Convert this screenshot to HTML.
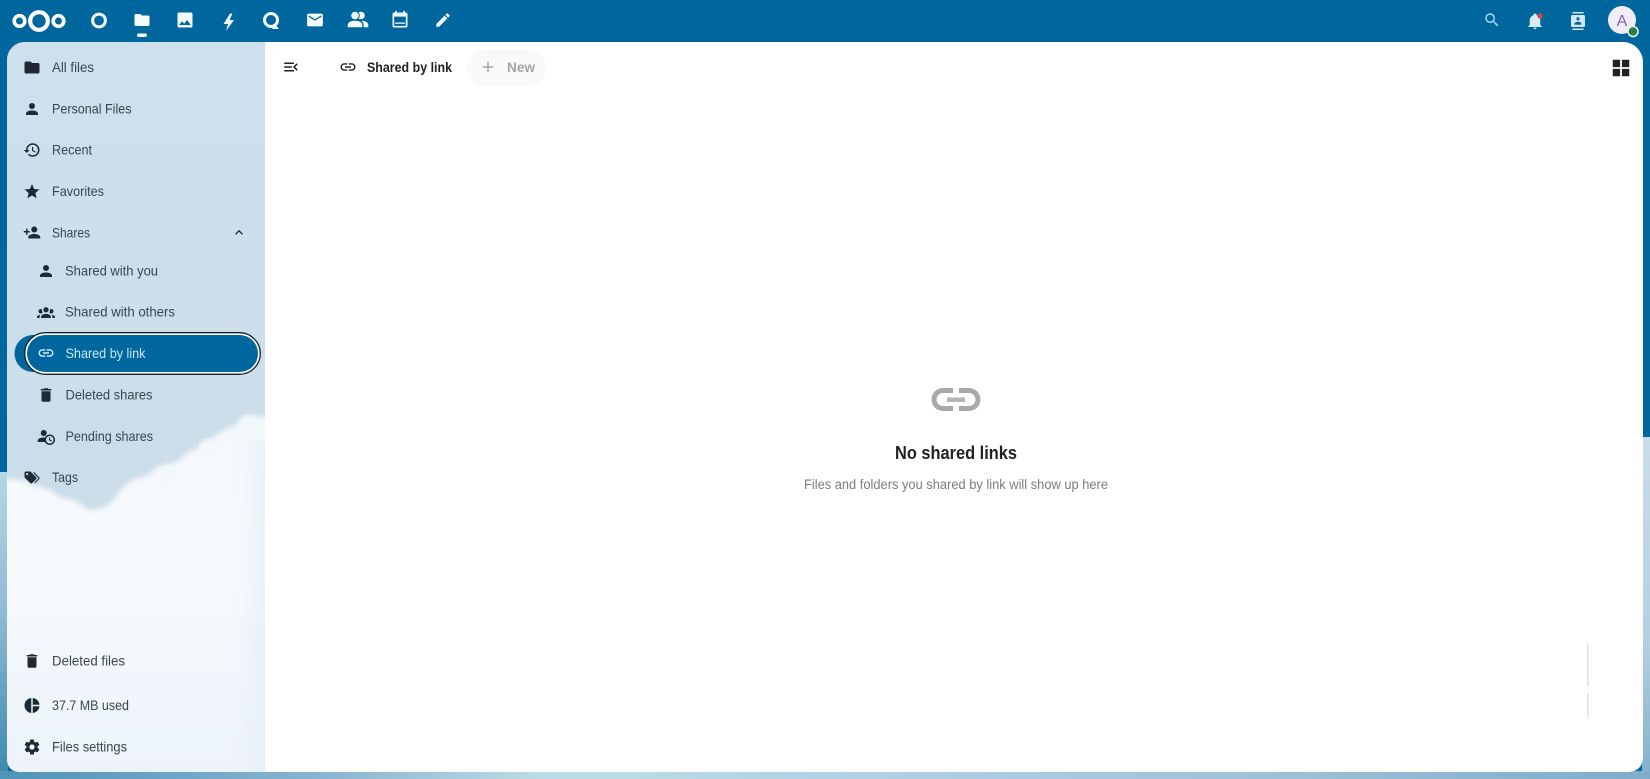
<!DOCTYPE html>
<html><head><meta charset="utf-8"><title>Files</title>
<style>
html,body{margin:0;padding:0;width:1650px;height:779px;overflow:hidden;background:#00679e}
svg{display:block;position:absolute;left:0;top:0}
text{font-family:"Liberation Sans",sans-serif;font-size:14px;fill:#3a464e}
.b{font-weight:bold}
</style></head><body>
<svg width="1650" height="779" viewBox="0 0 1650 779" xmlns="http://www.w3.org/2000/svg">
<defs>
<linearGradient id="lstrip" x1="0" y1="0" x2="0" y2="1"><stop offset="0" stop-color="#b4d6e6"/><stop offset=".45" stop-color="#8fbcd4"/><stop offset="1" stop-color="#3a87ad"/></linearGradient>
<linearGradient id="rstrip" x1="0" y1="0" x2="0" y2="1"><stop offset="0" stop-color="#c9dce9"/><stop offset=".6" stop-color="#b5cfe0"/><stop offset="1" stop-color="#7fb0cc"/></linearGradient>
<linearGradient id="bstrip" x1="0" y1="0" x2="1" y2="0"><stop offset="0" stop-color="#4f93b8"/><stop offset=".2" stop-color="#8ab6d0"/><stop offset=".33" stop-color="#bcdde6"/><stop offset=".5" stop-color="#b2d2e4"/><stop offset=".75" stop-color="#a0c3da"/><stop offset="1" stop-color="#7fadc9"/></linearGradient>
<linearGradient id="sky" x1="0" y1="0" x2="0" y2="1"><stop offset="0" stop-color="#cee0ec"/><stop offset=".75" stop-color="#c9dce8"/><stop offset="1" stop-color="#bdd1dd"/></linearGradient>
<linearGradient id="cloud" x1="0" y1="0" x2="0" y2="1"><stop offset="0" stop-color="#f3f8fb"/><stop offset=".4" stop-color="#f6fafd"/><stop offset="1" stop-color="#ecf3f8"/></linearGradient>
<linearGradient id="fade" x1="0" y1="0" x2="1" y2="0"><stop offset="0" stop-color="#e4edf3" stop-opacity="0"/><stop offset="1" stop-color="#e4edf3" stop-opacity=".6"/></linearGradient>
<clipPath id="side"><path d="M25 42H265V772H21Q7 772 7 758V60A18 18 0 0 1 25 42Z"/></clipPath>
<filter id="bl" x="-5%" y="-5%" width="110%" height="110%"><feGaussianBlur stdDeviation="2.6"/></filter>
</defs>

<!-- background strips -->
<rect x="0" y="0" width="1650" height="779" fill="#00679e"/>
<rect x="0" y="472" width="8" height="307" fill="url(#lstrip)"/>
<rect x="1642" y="437" width="8" height="342" fill="url(#rstrip)"/>
<rect x="0" y="771" width="1650" height="8" fill="url(#bstrip)"/>

<!-- main panel -->
<path d="M25 42H1623A20 20 0 0 1 1643 62V756Q1643 772 1627 772H21Q7 772 7 758V60A18 18 0 0 1 25 42Z" fill="#fff"/>

<!-- sidebar -->
<g clip-path="url(#side)">
<rect x="7" y="42" width="258" height="730" fill="url(#sky)"/>
<g filter="url(#bl)" fill="url(#cloud)">
<path d="M275 416L262 417L248 415L238 424L226 429L214 436L204 446L190 451L176 462L160 466L146 476L132 480L120 490L112 502L100 509L88 510L76 501L60 497L50 490L36 486L22 480L0 478V790H275Z"/>
</g>
<circle cx="248" cy="426" r="10" fill="#f3f8fb" filter="url(#bl)"/>
<circle cx="208" cy="448" r="9" fill="#f3f8fb" filter="url(#bl)"/>
<circle cx="165" cy="476" r="10" fill="#f3f8fb" filter="url(#bl)"/>
<rect x="235" y="440" width="30" height="332" fill="url(#fade)"/>
</g>

<!-- header logo -->
<g fill="none" stroke="#fff">
<circle cx="39" cy="21" r="8.8" stroke-width="4.2"/>
<circle cx="19.5" cy="21" r="5.3" stroke-width="3.6"/>
<circle cx="58.5" cy="21" r="5.3" stroke-width="3.6"/>
</g>

<!-- header nav icons -->
<circle cx="99" cy="20.5" r="6.4" fill="none" stroke="#f1f7fb" stroke-width="3"/>
<g fill="#f4f9fc">
<svg x="133" y="11" width="18" height="18" viewBox="0 0 24 24"><path d="M10,4H4C2.89,4 2,4.89 2,6V18A2,2 0 0,0 4,20H20A2,2 0 0,0 22,18V8C22,6.89 21.1,6 20,6H12L10,4Z"/></svg>
<rect x="137" y="33.500" width="10" height="3.500" rx="1.700"/>
<svg x="175" y="10" width="20" height="20" viewBox="0 0 24 24"><path d="M8.5,13.5L11,16.5L14.5,12L19,18H5M21,19V5C21,3.89 20.1,3 19,3H5A2,2 0 0,0 3,5V19A2,2 0 0,0 5,21H19A2,2 0 0,0 21,19Z"/></svg>
<path d="M230 13.500L223.500 24H228L226 31L234 20H229.500L232.500 13.500Z"/>
</g>
<circle cx="271" cy="20" r="6.500" fill="none" stroke="#f1f7fb" stroke-width="3"/>
<path d="M275 24L279 29H272Z" fill="#f4f9fc"/>
<g fill="#f4f9fc">
<svg x="305.500" y="10.500" width="19" height="19" viewBox="0 0 24 24"><path d="M20,8L12,13L4,8V6L12,11L20,6M20,4H4C2.89,4 2,4.89 2,6V18A2,2 0 0,0 4,20H20A2,2 0 0,0 22,18V6C22,4.89 21.1,4 20,4Z"/></svg>
<svg x="346" y="8" width="24" height="24" viewBox="0 0 24 24" stroke="#f4f9fc" stroke-width=".6"><path d="M16 17v2H2v-2s0-4 7-4 7 4 7 4m-3.500-9.500A3.500 3.500 0 1 0 9 11a3.500 3.500 0 0 0 3.500-3.500m3.440 5.500A5.320 5.320 0 0 1 18 17v2h4v-2s0-3.630-6.060-4M15 4a3.390 3.390 0 0 0-1.930.590 5 5 0 0 1 0 5.820A3.390 3.390 0 0 0 15 11a3.500 3.500 0 0 0 0-7z"/></svg>
<svg x="390" y="9" width="20" height="22" viewBox="0 0 24 24"><path d="M19 19H5V8h14v11zM16 1v2H8V1H6v2H5c-1.110 0-2 .890-2 2v14a2 2 0 0 0 2 2h14a2 2 0 0 0 2-2V5c0-1.110-.900-2-2-2h-1V1h-2zM6 15h12v1.500H6z"/></svg>
<svg x="434" y="11" width="18" height="18" viewBox="0 0 24 24"><path d="M20.71,7.04C21.1,6.65 21.1,6 20.71,5.63L18.37,3.29C18,2.9 17.35,2.9 16.96,3.29L15.12,5.12L18.87,8.87M3,17.25V21H6.75L17.81,9.93L14.06,6.18L3,17.25Z"/></svg>
</g>

<!-- header right -->
<svg x="1483" y="11" width="18" height="18" viewBox="0 0 24 24" fill="#a9d6f5"><path d="M9.5,3A6.5,6.5 0 0,1 16,9.5C16,11.11 15.41,12.59 14.44,13.73L14.71,14H15.5L20.5,19L19,20.5L14,15.5V14.71L13.73,14.44C12.59,15.41 11.11,16 9.5,16A6.5,6.5 0 0,1 3,9.5A6.5,6.5 0 0,1 9.5,3M9.5,5C7,5 5,7 5,9.5C5,12 7,14 9.5,14C12,14 14,12 14,9.5C14,7 12,5 9.5,5Z"/></svg>
<svg x="1526" y="11" width="18" height="20" viewBox="0 0 24 24" fill="#d8ebf6"><path d="M21,19V20H3V19L5,17V11C5,7.9 7.03,5.17 10,4.29C10,4.19 10,4.1 10,4A2,2 0 0,1 12,2A2,2 0 0,1 14,4C14,4.1 14,4.19 14,4.29C16.97,5.17 19,7.9 19,11V17L21,19M14,21A2,2 0 0,1 12,23A2,2 0 0,1 10,21"/></svg>
<circle cx="1540" cy="16" r="2.600" fill="#d9473a"/>
<svg x="1571" y="12" width="14" height="18" viewBox="2 0 20 24" preserveAspectRatio="none" fill="#d3e7f3"><path d="M20,0H4V2H20V0M4,24H20V22H4V24M20,4H4A2,2 0 0,0 2,6V18A2,2 0 0,0 4,20H20A2,2 0 0,0 22,18V6A2,2 0 0,0 20,4M12,6.75A2.25,2.25 0 0,1 14.25,9A2.25,2.25 0 0,1 12,11.25A2.25,2.25 0 0,1 9.75,9A2.25,2.25 0 0,1 12,6.75M17,17H7V15.5C7,13.83 10.33,13 12,13C13.67,13 17,13.83 17,15.5V17Z"/></svg>
<circle cx="1622" cy="20" r="14" fill="#f1edf7"/>
<text x="1622" y="26" text-anchor="middle" style="font-size:16px;fill:#7f63ac">A</text>
<circle cx="1633" cy="31.500" r="5" fill="#2f7d40" stroke="#e9f1ee" stroke-width="1.500"/>

<!-- sidebar active pill -->
<path d="M33 335H70V372H33A18.500 18.500 0 0 1 33 335Z" fill="#00679e"/>
<rect x="24.700" y="332.700" width="235.600" height="41.600" rx="20.800" fill="#fff" stroke="#14222c" stroke-width="1.300"/>
<rect x="27" y="335" width="231" height="37" rx="18.500" fill="#00679e"/>

<!-- sidebar icons -->
<g fill="#1e2a33">
<svg x="23" y="58.500" width="18" height="18" viewBox="0 0 24 24"><path d="M10,4H4C2.89,4 2,4.89 2,6V18A2,2 0 0,0 4,20H20A2,2 0 0,0 22,18V8C22,6.89 21.1,6 20,6H12L10,4Z"/></svg>
<svg x="23" y="100" width="18" height="18" viewBox="0 0 24 24"><path d="M12,4A4,4 0 0,1 16,8A4,4 0 0,1 12,12A4,4 0 0,1 8,8A4,4 0 0,1 12,4M12,14C16.42,14 20,15.79 20,18V20H4V18C4,15.79 7.58,14 12,14Z"/></svg>
<svg x="23" y="141" width="18" height="18" viewBox="0 0 24 24"><path d="M13.5,8H12V13L16.28,15.54L17,14.33L13.5,12.25V8M13,3A9,9 0 0,0 4,12H1L4.96,16.03L9,12H6A7,7 0 0,1 13,5A7,7 0 0,1 20,12A7,7 0 0,1 13,19C11.07,19 9.32,18.21 8.06,16.94L6.64,18.36C8.27,20 10.5,21 13,21A9,9 0 0,0 22,12A9,9 0 0,0 13,3"/></svg>
<svg x="23" y="182.500" width="18" height="18" viewBox="0 0 24 24"><path d="M12,17.27L18.18,21L16.54,13.97L22,9.24L14.81,8.62L12,2L9.19,8.62L2,9.24L7.45,13.97L5.82,21L12,17.27Z"/></svg>
<svg x="23" y="223.500" width="18" height="18" viewBox="0 0 24 24"><path d="M15,14C12.33,14 7,15.33 7,18V20H23V18C23,15.33 17.67,14 15,14M6,10V7H4V10H1V12H4V15H6V12H9V10M15,12A4,4 0 0,0 19,8A4,4 0 0,0 15,4A4,4 0 0,0 11,8A4,4 0 0,0 15,12Z"/></svg>
<svg x="231" y="224.500" width="16" height="16" viewBox="0 0 24 24"><path d="M7.41,15.41L12,10.83L16.59,15.41L18,14L12,8L6,14L7.41,15.41Z"/></svg>
<svg x="37" y="262" width="18" height="18" viewBox="0 0 24 24"><path d="M12,4A4,4 0 0,1 16,8A4,4 0 0,1 12,12A4,4 0 0,1 8,8A4,4 0 0,1 12,4M12,14C16.42,14 20,15.79 20,18V20H4V18C4,15.79 7.58,14 12,14Z"/></svg>
<svg x="37" y="303" width="18" height="18" viewBox="0 0 24 24"><path d="M12,5.5A3.5,3.5 0 0,1 15.5,9A3.5,3.5 0 0,1 12,12.5A3.5,3.5 0 0,1 8.5,9A3.5,3.5 0 0,1 12,5.5M5,8C5.56,8 6.08,8.15 6.53,8.42C6.38,9.85 6.8,11.27 7.66,12.38C7.16,13.34 6.16,14 5,14A3,3 0 0,1 2,11A3,3 0 0,1 5,8M19,8A3,3 0 0,1 22,11A3,3 0 0,1 19,14C17.84,14 16.84,13.34 16.34,12.38C17.2,11.27 17.62,9.85 17.47,8.42C17.92,8.15 18.44,8 19,8M5.500,18.25C5.5,16.18 8.41,14.5 12,14.5C15.59,14.5 18.5,16.18 18.5,18.25V20H5.5V18.25M0,20V18.5C0,17.11 1.89,15.94 4.45,15.6C3.86,16.28 3.5,17.22 3.5,18.25V20H0M24,20H20.5V18.25C20.5,17.22 20.14,16.28 19.55,15.6C22.11,15.94 24,17.11 24,18.5V20Z"/></svg>
<svg x="37" y="386" width="18" height="18" viewBox="0 0 24 24"><path d="M19,4H15.5L14.5,3H9.500L8.500,4H5V6H19M6,19A2,2 0 0,0 8,21H16A2,2 0 0,0 18,19V7H6V19Z"/></svg>
<svg x="37" y="427" width="18" height="18" viewBox="0 0 24 24"><path d="M10.63,14.1C12.23,10.58 16.38,9.03 19.9,10.63C23.42,12.23 24.97,16.38 23.37,19.9C22.24,22.4 19.75,24 17,24C14.3,24 11.83,22.44 10.67,20H1V18C1.06,16.86 1.84,15.93 3.34,15.18C4.84,14.43 6.72,14.04 9,14C9.57,14 10.11,14.05 10.63,14.1M9,4C10.12,4.03 11.06,4.42 11.81,5.17C12.56,5.92 12.93,6.86 12.93,8C12.93,9.14 12.56,10.08 11.81,10.83C11.06,11.58 10.12,11.95 9,11.95C7.88,11.95 6.94,11.58 6.19,10.83C5.44,10.08 5.07,9.14 5.07,8C5.07,6.86 5.44,5.92 6.19,5.17C6.94,4.42 7.88,4.03 9,4M17,22A5,5 0 0,0 22,17A5,5 0 0,0 17,12A5,5 0 0,0 12,17A5,5 0 0,0 17,22M16,14H17.5V16.82L19.94,18.23L19.19,19.53L16,17.69V14Z"/></svg>
<svg x="23" y="468.500" width="18" height="18" viewBox="0 0 24 24"><path d="M5.5,9A1.5,1.5 0 0,0 7,7.5A1.5,1.5 0 0,0 5.5,6A1.5,1.5 0 0,0 4,7.5A1.5,1.5 0 0,0 5.5,9M17.41,11.58C17.77,11.94 18,12.44 18,13C18,13.55 17.78,14.05 17.41,14.41L12.41,19.41C12.05,19.77 11.55,20 11,20C10.45,20 9.95,19.78 9.58,19.41L2.59,12.42C2.22,12.05 2,11.55 2,11V6C2,4.89 2.89,4 4,4H9C9.55,4 10.05,4.22 10.41,4.58L17.41,11.58M13.54,5.71L14.54,4.71L21.41,11.58C21.78,11.94 22,12.45 22,13C22,13.55 21.78,14.05 21.42,14.41L16.04,19.79L15.04,18.79L20.75,13L13.54,5.71Z"/></svg>
<svg x="23" y="652" width="18" height="18" viewBox="0 0 24 24"><path d="M19,4H15.5L14.5,3H9.500L8.500,4H5V6H19M6,19A2,2 0 0,0 8,21H16A2,2 0 0,0 18,19V7H6V19Z"/></svg>
<svg x="23" y="696.500" width="18" height="18" viewBox="0 0 24 24"><path d="M11,2V22C5.9,21.5 2,17.2 2,12C2,6.8 5.9,2.5 11,2M13,2V11H22C21.5,6.2 17.8,2.5 13,2M13,13V22C17.7,21.5 21.5,17.8 22,13H13Z"/></svg>
<svg x="23" y="738" width="18" height="18" viewBox="0 0 24 24"><path d="M12,15.5A3.5,3.5 0 0,1 8.5,12A3.5,3.5 0 0,1 12,8.5A3.5,3.5 0 0,1 15.5,12A3.5,3.5 0 0,1 12,15.5M19.43,12.97C19.47,12.65 19.5,12.33 19.5,12C19.5,11.67 19.47,11.34 19.43,11L21.54,9.37C21.73,9.22 21.78,8.95 21.66,8.73L19.66,5.27C19.54,5.05 19.27,4.96 19.05,5.05L16.56,6.05C16.04,5.66 15.5,5.32 14.87,5.07L14.5,2.42C14.46,2.18 14.25,2 14,2H10C9.75,2 9.54,2.18 9.5,2.42L9.13,5.07C8.5,5.32 7.96,5.66 7.44,6.05L4.95,5.05C4.73,4.96 4.46,5.05 4.34,5.27L2.34,8.73C2.21,8.95 2.27,9.22 2.46,9.37L4.57,11C4.53,11.34 4.5,11.67 4.5,12C4.5,12.33 4.53,12.65 4.57,12.97L2.46,14.63C2.27,14.78 2.21,15.05 2.34,15.27L4.34,18.73C4.46,18.95 4.73,19.03 4.95,18.95L7.44,17.94C7.96,18.34 8.5,18.68 9.13,18.93L9.5,21.58C9.54,21.82 9.75,22 10,22H14C14.25,22 14.46,21.82 14.5,21.58L14.87,18.93C15.5,18.67 16.04,18.34 16.56,17.94L19.05,18.95C19.27,19.03 19.54,18.95 19.66,18.73L21.66,15.27C21.78,15.05 21.73,14.78 21.54,14.63L19.43,12.97Z"/></svg>
</g>
<svg x="37" y="344" width="18" height="18" viewBox="0 0 24 24" fill="#d5ecfb"><path d="M3.9,12C3.9,10.29 5.29,8.9 7,8.9H11V7H7A5,5 0 0,0 2,12A5,5 0 0,0 7,17H11V15.1H7C5.29,15.1 3.9,13.71 3.9,12M8,13H16V11H8V13M17,7H13V8.9H17C18.71,8.9 20.1,10.29 20.1,12C20.1,13.71 18.71,15.1 17,15.1H13V17H17A5,5 0 0,0 22,12A5,5 0 0,0 17,7Z"/></svg>

<!-- sidebar text -->
<text x="52" y="72" textLength="42" lengthAdjust="spacingAndGlyphs">All files</text>
<text x="52" y="113.500" textLength="79.500" lengthAdjust="spacingAndGlyphs">Personal Files</text>
<text x="52" y="154.500" textLength="40" lengthAdjust="spacingAndGlyphs">Recent</text>
<text x="52" y="196" textLength="52" lengthAdjust="spacingAndGlyphs">Favorites</text>
<text x="52" y="237.500" textLength="38" lengthAdjust="spacingAndGlyphs">Shares</text>
<text x="65" y="275.500" textLength="93" lengthAdjust="spacingAndGlyphs">Shared with you</text>
<text x="65" y="316.500" textLength="110" lengthAdjust="spacingAndGlyphs">Shared with others</text>
<text x="65.500" y="358" textLength="80" lengthAdjust="spacingAndGlyphs" style="fill:#c9e8fb">Shared by link</text>
<text x="65.500" y="399.500" textLength="87" lengthAdjust="spacingAndGlyphs">Deleted shares</text>
<text x="65.500" y="441" textLength="87.500" lengthAdjust="spacingAndGlyphs">Pending shares</text>
<text x="52" y="482" textLength="26" lengthAdjust="spacingAndGlyphs">Tags</text>
<text x="52" y="665.500" textLength="73" lengthAdjust="spacingAndGlyphs">Deleted files</text>
<text x="52" y="710" textLength="77" lengthAdjust="spacingAndGlyphs">37.7 MB used</text>
<text x="52" y="751.500" textLength="75" lengthAdjust="spacingAndGlyphs">Files settings</text>

<!-- toolbar -->
<svg x="282" y="58" width="18" height="18" viewBox="0 0 24 24" fill="#222"><path d="M21,15.61L19.59,17L14.58,12L19.59,7L21,8.39L17.44,12L21,15.61M3,6H16V8H3V6M3,13V11H13V13H3M3,18V16H16V18H3Z"/></svg>
<svg x="339" y="58" width="18" height="18" viewBox="0 0 24 24" fill="#222"><path d="M3.9,12C3.9,10.29 5.29,8.9 7,8.9H11V7H7A5,5 0 0,0 2,12A5,5 0 0,0 7,17H11V15.1H7C5.29,15.1 3.9,13.71 3.9,12M8,13H16V11H8V13M17,7H13V8.9H17C18.71,8.9 20.1,10.29 20.1,12C20.1,13.71 18.71,15.1 17,15.1H13V17H17A5,5 0 0,0 22,12A5,5 0 0,0 17,7Z"/></svg>
<text class="b" x="367" y="72" textLength="85" lengthAdjust="spacingAndGlyphs" style="fill:#222">Shared by link</text>
<rect x="467" y="50" width="79" height="36" rx="18" fill="#f9f9f9"/>
<svg x="479" y="58" width="18" height="18" viewBox="0 0 24 24" fill="#a6a6a6"><path d="M19 13h-6v6h-2v-6H5v-2h6V5h2v6h6z"/></svg>
<text class="b" x="507" y="72" textLength="28" lengthAdjust="spacingAndGlyphs" style="fill:#a3a3a3">New</text>
<svg x="1610" y="57" width="22" height="22" viewBox="0 0 24 24" fill="#222"><path d="M3 11h8V3H3m0 18h8v-8H3m10 8h8v-8h-8m0-10v8h8V3"/></svg>

<!-- empty state -->
<g fill="none" stroke="#a9a9a9" stroke-width="5">
<path d="M953 390.500H943a9 9 0 0 0 0 18H953"/>
<path d="M959 390.500H969a9 9 0 0 1 0 18H959"/>
</g>
<rect x="947" y="397.500" width="18" height="4.500" fill="#b4b4b4"/>
<text class="b" x="895" y="459" textLength="122" lengthAdjust="spacingAndGlyphs" style="font-size:18px;fill:#222">No shared links</text>
<text x="804" y="489" textLength="304" lengthAdjust="spacingAndGlyphs" style="font-size:13.500px;fill:#7d7d7d">Files and folders you shared by link will show up here</text>

<!-- faint lines -->
<rect x="1587" y="643" width="1.500" height="43" fill="#e9dfd4"/>
<rect x="1587" y="693" width="1.500" height="24" fill="#ecdcc8"/>
</svg>
</body></html>
